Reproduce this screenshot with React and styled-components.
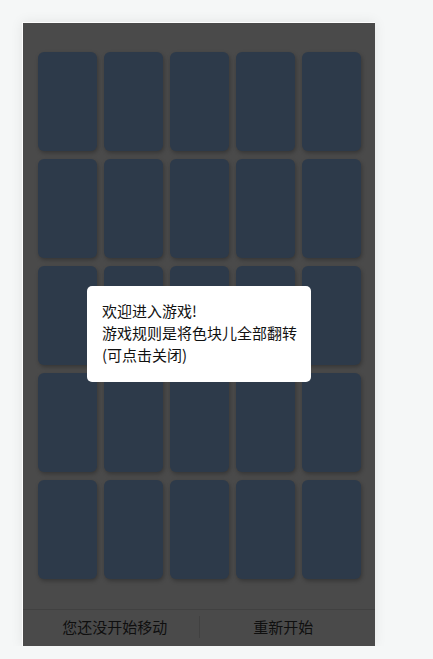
import React from "react";
import styled, { createGlobalStyle } from "styled-components";

const Global = createGlobalStyle`
  html, body { margin: 0; padding: 0; background: #f5f7f7; }
  body { font-family: "Noto Sans CJK SC", "Noto Sans", sans-serif; }
`;

const Frame = styled.div`
  position: relative;
  margin: 22px 0 0 22px;
  width: 352px;
  border-top: 1px solid #fdfdfd;
  border-left: 1px solid #fdfdfd;
  background: #4a4a4a;
  box-shadow: 0 0 12px rgba(0, 0, 0, 0.08);
  display: flex;
  flex-direction: column;
`;

const Board = styled.div`
  padding: 29px 15px 30px;
  display: grid;
  grid-template-columns: repeat(5, 59px);
  grid-auto-rows: 99px;
  column-gap: 7px;
  row-gap: 8px;
`;

const Card = styled.div`
  background: #2d3a4a;
  border-radius: 6px;
  box-shadow: 1px 2px 4px rgba(0, 0, 0, 0.28);
`;

const Bar = styled.div`
  border-top: 1px solid #414141;
  height: 37px;
  box-sizing: border-box;
  padding-bottom: 3px;
  display: flex;
  align-items: center;
`;

const BarItem = styled.div`
  flex: 1;
  text-align: center;
  font-size: 15px;
  line-height: 22px;
  color: #0f0f0f;
  padding-left: ${(p) => p.$pl || 0}px;
  padding-right: ${(p) => p.$pr || 0}px;
  border-right: ${(p) => (p.$divider ? "1px solid #414141" : "none")};
`;

const Modal = styled.div`
  position: absolute;
  left: 64px;
  top: 263px;
  width: 195px;
  padding: 14px 14px 16px 15px;
  background: #ffffff;
  border-radius: 5px;
  font-size: 15px;
  line-height: 22px;
  color: #111111;
  white-space: nowrap;
  cursor: pointer;
`;

export default function App() {
  const cards = Array.from({ length: 25 }, (_, i) => i);
  return (
    <>
      <Global />
      <Frame>
        <Board>
          {cards.map((i) => (
            <Card key={i} />
          ))}
        </Board>
        <Bar>
          <BarItem $divider $pl={8}>您还没开始移动</BarItem>
          <BarItem $pr={8}>重新开始</BarItem>
        </Bar>
        <Modal>
          欢迎进入游戏!
          <br />
          游戏规则是将色块儿全部翻转
          <br />
          (可点击关闭)
        </Modal>
      </Frame>
    </>
  );
}
